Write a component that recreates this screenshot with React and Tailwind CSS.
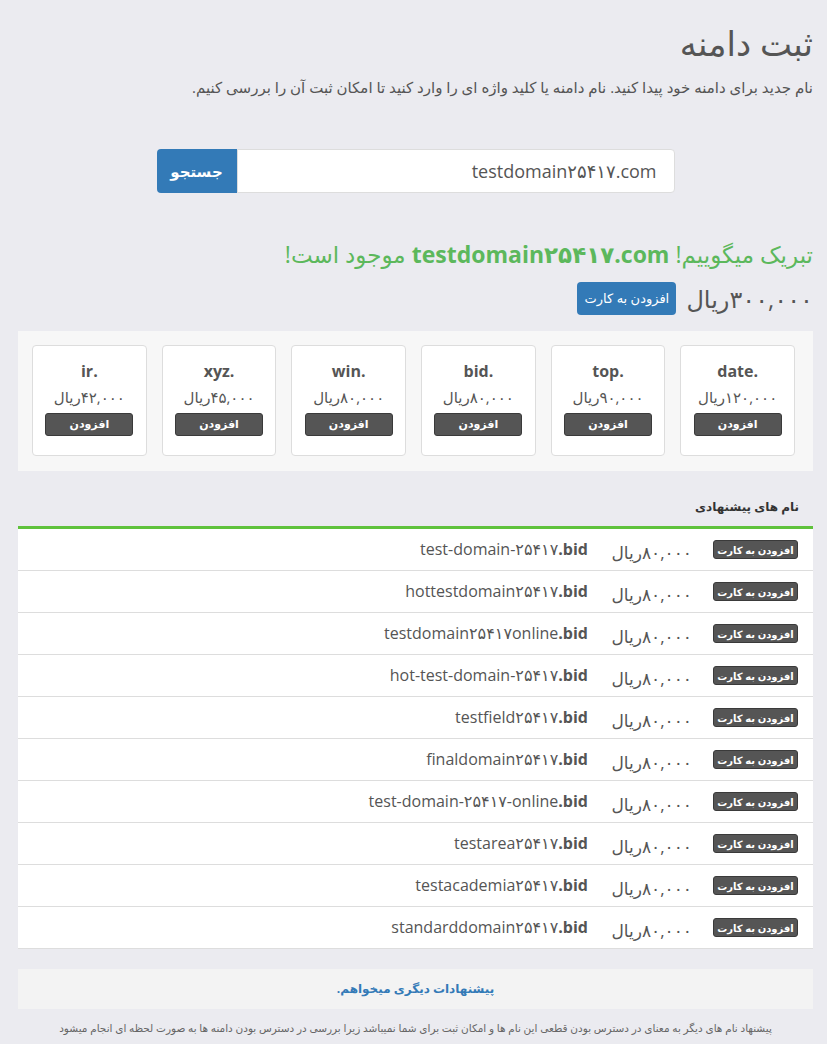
import React from "react";

const tlds = [
  { name: "date.", price: "۱۲۰,۰۰۰ریال" },
  { name: "top.", price: "۹۰,۰۰۰ریال" },
  { name: "bid.", price: "۸۰,۰۰۰ریال" },
  { name: "win.", price: "۸۰,۰۰۰ریال" },
  { name: "xyz.", price: "۴۵,۰۰۰ریال" },
  { name: "ir.", price: "۴۲,۰۰۰ریال" },
];

const suggestions = [
  "test-domain-۲۵۴۱۷",
  "hottestdomain۲۵۴۱۷",
  "testdomain۲۵۴۱۷online",
  "hot-test-domain-۲۵۴۱۷",
  "testfield۲۵۴۱۷",
  "finaldomain۲۵۴۱۷",
  "test-domain-۲۵۴۱۷-online",
  "testarea۲۵۴۱۷",
  "testacademia۲۵۴۱۷",
  "standarddomain۲۵۴۱۷",
];

const font = { fontFamily: '"Open Sans", "DejaVu Sans", sans-serif' };

const TldCard = ({ name, price }) => (
  <div className="flex h-[111px] flex-col items-center rounded border border-[#dddddd] bg-white">
    <div className="mt-[14px] text-[16px] font-bold leading-[22px] text-[#555]" dir="ltr">
      {name}
    </div>
    <div className="mt-[5px] text-[15px] leading-[20px] text-[#555]">{price}</div>
    <button className="mt-[6px] h-[23px] w-[88px] rounded-[3px] border border-[#3a3a3a] bg-[#555] text-[11px] font-bold text-white">
      افزودن
    </button>
  </div>
);

const SuggestionRow = ({ name }) => (
  <div className="flex h-[42px] items-center border-b border-[#dddddd] bg-white pr-[15px]">
    <button className="h-[19px] w-[85px] rounded-[3px] border border-[#3a3a3a] bg-[#555] text-[10px] font-bold leading-none text-white">
      افزودن به کارت
    </button>
    <div className="mr-[21px] w-[84px] pt-[6px] text-[17px] leading-[22px] text-[#555]">
      ۸۰,۰۰۰ریال
    </div>
    <div className="mr-[20px] pb-[2px] text-[16px] leading-[22px] text-[#555]" dir="ltr">
      {name}
      <span className="font-bold">.bid</span>
    </div>
  </div>
);

export default function App() {
  return (
    <div dir="rtl" style={font} className="min-h-[1044px] bg-[#ebebf0] pl-[18px] pr-[14px] pt-[23px] text-[#555]">
      <h1 className="text-[34px] leading-[40px] text-[#555]">ثبت دامنه</h1>
      <p className="mt-[13px] text-[15px] leading-[22px] text-[#555]">
        نام جدید برای دامنه خود پیدا کنید. نام دامنه یا کلید واژه ای را وارد کنید تا امکان ثبت آن را بررسی کنیم.
      </p>

      <div className="mt-[51px] flex justify-center">
        <div className="flex h-[44px]">
          <div className="flex w-[438px] items-center rounded-r border border-[#dddddd] bg-white px-[17px] text-[18px] text-[#555]">
            <span dir="ltr">testdomain۲۵۴۱۷.com</span>
          </div>
          <button className="w-[80px] rounded-l bg-[#337ab7] text-[15px] font-bold text-white">
            جستجو
          </button>
        </div>
      </div>

      <div className="mt-[45px] text-[23px] leading-[32px] text-[#5cb85c]">
        تبریک میگوییم! <span className="font-bold">testdomain۲۵۴۱۷.com</span> موجود است!
      </div>

      <div className="mt-[12px] flex items-center">
        <span className="text-[24px] leading-[32px] text-[#555]">۳۰۰,۰۰۰ریال</span>
        <button className="mr-[10px] h-[33px] w-[99px] rounded bg-[#337ab7] text-[13px] text-white">
          افزودن به کارت
        </button>
      </div>

      <div className="mt-[16px] grid grid-cols-6 gap-[15px] bg-[#f7f7f7] pb-[15px] pl-[14px] pr-[18px] pt-[14px]">
        {tlds.map((t) => (
          <TldCard key={t.name} {...t} />
        ))}
      </div>

      <div className="mt-[26px] border-b-[3px] border-[#5fc23c] pb-[9px] pr-[14px] text-[12px] font-bold leading-[20px] text-[#333]">
        نام های پیشنهادی
      </div>
      <div>
        {suggestions.map((s) => (
          <SuggestionRow key={s} name={s} />
        ))}
      </div>

      <div className="mt-[20px] flex h-[40px] items-center justify-center bg-[#f3f3f3] text-[12px] font-bold text-[#337ab7]">
        پیشنهادات دیگری میخواهم.
      </div>
      <p className="mt-[11px] text-center text-[10.5px] leading-[16px] text-[#666]">
        پیشنهاد نام های دیگر به معنای در دسترس بودن قطعی این نام ها و امکان ثبت برای شما نمیباشد زیرا بررسی در دسترس بودن دامنه ها به صورت لحظه ای انجام میشود
      </p>
    </div>
  );
}
